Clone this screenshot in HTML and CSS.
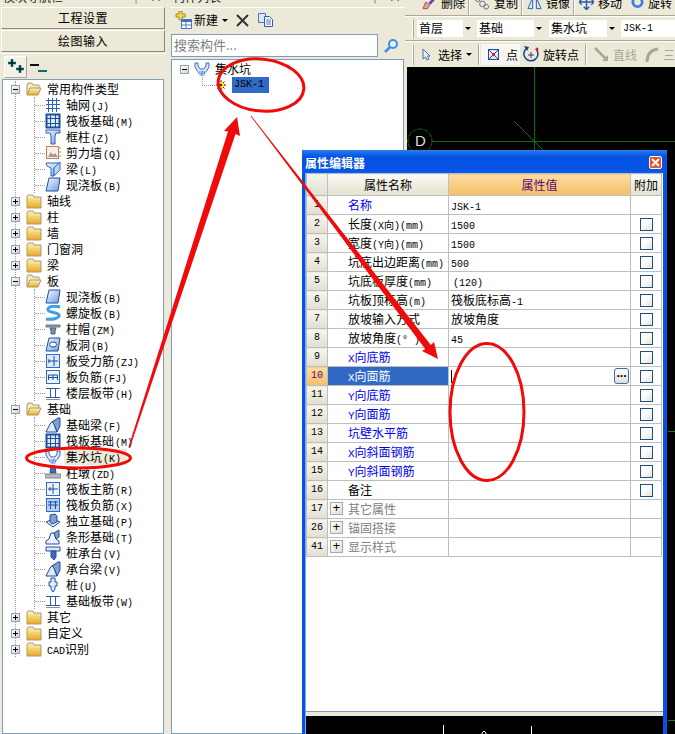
FILE: index.html
```html
<!DOCTYPE html>
<html lang="zh-CN">

<head>
    <meta charset="UTF-8">
    <title>属性编辑器</title>
    <link rel="stylesheet" href="styles.css">
</head>

<body>
    <svg class="defs" width="0" height="0">
        <defs>
            <linearGradient id="fold" x1="0" y1="0" x2="0" y2="1">
                <stop offset="0" stop-color="#fff3c0" />
                <stop offset="1" stop-color="#e8a91e" />
            </linearGradient>
            <linearGradient id="blu" x1="0" y1="0" x2="1" y2="1">
                <stop offset="0" stop-color="#f4f8ff" />
                <stop offset="1" stop-color="#6f9ee0" />
            </linearGradient>
            <symbol id="folder" viewBox="0 0 16 16">
                <path d="M1 4l1-2h5l1 2h7v11H1z" fill="url(#fold)" stroke="#a89a70" />
            </symbol>
            <symbol id="folder-open" viewBox="0 0 16 16">
                <path d="M1 14V4l1-2h4l1 2h6v3" fill="#f6e9b8" stroke="#a89a70" />
                <path d="M1 14l3-7h11l-3 7z" fill="url(#fold)" stroke="#a89a70" />
            </symbol>
            <symbol id="i-grid" viewBox="0 0 16 16">
                <path d="M3.500 1v14M7.500 1v14M11.500 1v14M1 3.500h14M1 7.500h14M1 11.500h14" stroke="#2b62c4" fill="none" />
            </symbol>
            <symbol id="i-raft" viewBox="0 0 16 16">
                <rect x="1.500" y="1.500" width="13" height="13" fill="#dfe9fa" stroke="#1d4f9f" stroke-width="2" />
                <path d="M5.500 2v12M10.500 2v12M2 5.500h12M2 10.500h12" stroke="#1d4f9f" fill="none" />
            </symbol>
            <symbol id="i-col" viewBox="0 0 16 16">
                <path d="M1 1h14v3H11l-1 3v8H6V7L5 4H1z" fill="url(#blu)" stroke="#2a5cb0" />
            </symbol>
            <symbol id="i-wall" viewBox="0 0 16 16">
                <rect x="1.500" y="1.500" width="12" height="12" fill="#fbeee6" stroke="#c08060" />
                <path d="M3 12l3-5 2 3 2-2 3 4z" fill="#9a9a9a" />
                <path d="M14 3h2M14 7h2M14 11h2" stroke="#d88020" />
            </symbol>
            <symbol id="i-beam" viewBox="0 0 16 16">
                <path d="M1 2h14l-1 3-5 2v8H6V7L2 5z" fill="url(#blu)" stroke="#2a6cc8" />
                <path d="M9 7l6-6v8l-6 6z" fill="#bcd4f4" stroke="#2a6cc8" />
            </symbol>
            <symbol id="i-slab" viewBox="0 0 16 16">
                <path d="M4 1h11l-2 13H1z" fill="url(#blu)" stroke="#1d4f9f" />
            </symbol>
            <symbol id="i-spiral" viewBox="0 0 16 16">
                <path d="M15 2C8 0 2 2 3 5s10 2 11 5-6 5-13 4" fill="none" stroke="#3f9de8" stroke-width="3" />
            </symbol>
            <symbol id="i-cap" viewBox="0 0 16 16">
                <path d="M1 4h14v2H1z" fill="#9aa0a8" stroke="#70757c" />
                <path d="M5 7h6l-1 3v3H6v-3z" fill="#6f8fc0" stroke="#50607a" />
            </symbol>
            <symbol id="i-hole" viewBox="0 0 16 16">
                <path d="M4 1h11l-2 13H1z" fill="url(#blu)" stroke="#1d4f9f" />
                <ellipse cx="8" cy="7.500" rx="3.500" ry="2.500" fill="#fff" stroke="#1d4f9f" />
            </symbol>
            <symbol id="i-rebar" viewBox="0 0 16 16">
                <rect x="1.500" y="1.500" width="13" height="13" fill="#dfe9fa" stroke="#2a6cc8" />
                <path d="M3 8h10M9 3v10" stroke="#1d4f9f" fill="none" />
                <path d="M4 6v4" stroke="#1d4f9f" />
            </symbol>
            <symbol id="i-neg" viewBox="0 0 16 16">
                <rect x="1.500" y="1.500" width="13" height="13" fill="#eef4fd" stroke="#2a6cc8" />
                <path d="M3.500 11V6h9v5M3 8.500h10M8 6v5" stroke="#1d4f9f" fill="none" />
            </symbol>
            <symbol id="i-band" viewBox="0 0 16 16">
                <path d="M1 3.500h14M1 12.500h14" stroke="#2a5cb0" fill="none" />
                <path d="M5.500 4v8M10.500 4v8" stroke="#2a5cb0" fill="none" />
                <path d="M1 14.500h14" stroke="#909090" stroke-width="1" />
            </symbol>
            <symbol id="i-fbeam" viewBox="0 0 16 16">
                <path d="M1 15l4-8 3-3h2l-1 3 3 8z" fill="#dfe9fa" stroke="#1d4f9f" />
                <path d="M7 5l6-4h2v8l-3 6-3-8z" fill="#7f9fcc" stroke="#1d4f9f" />
            </symbol>
            <symbol id="i-pit" viewBox="0 0 16 16">
                <path d="M1 2h3v3l2 3h4l2-3V2h3v4l-3 5H4L1 6z" fill="#dfe9fa" stroke="#2a6cc8" />
                <path d="M3 10h10l-3 5H6z" fill="#9cc0ec" />
                <path d="M4 12h1M7 13h1M10 12h1M8 11h1" stroke="#2a5cb0" />
            </symbol>
            <symbol id="i-pier" viewBox="0 0 16 16">
                <path d="M6 1h4l1 7H5z" fill="#3f6cb4" stroke="#2a4c88" />
                <path d="M0 9h16v4H0z" fill="#b8bcc4" stroke="#80858c" />
            </symbol>
            <symbol id="i-main" viewBox="0 0 16 16">
                <rect x="1.500" y="1.500" width="13" height="13" fill="#eef4fd" stroke="#2a6cc8" />
                <path d="M3 8h10M8 3v10M5 6v4" stroke="#1d4f9f" fill="none" />
            </symbol>
            <symbol id="i-negx" viewBox="0 0 16 16">
                <rect x="1.500" y="1.500" width="13" height="13" fill="#b8d0f0" stroke="#2a6cc8" />
                <path d="M3 8h10M5.500 4v8M10.500 4v8M3 5h10" stroke="#1d4f9f" fill="none" />
            </symbol>
            <symbol id="i-iso" viewBox="0 0 16 16">
                <path d="M1 9l7-3 7 3-7 5z" fill="#dfe9fa" stroke="#1d4f9f" />
                <path d="M5 2l5-1 2 2v6l-5 2-2-2z" fill="#7f9fcc" stroke="#1d4f9f" />
            </symbol>
            <symbol id="i-strip" viewBox="0 0 16 16">
                <path d="M1 15v-3l3-2 2-6h3l2 6 3 2v3z" fill="#eef4fd" stroke="#1d4f9f" />
                <path d="M9 4l5-3v7l-3 2z" fill="#7f9fcc" stroke="#1d4f9f" />
            </symbol>
            <symbol id="i-pcap" viewBox="0 0 16 16">
                <path d="M1 2h14v4H1z" fill="#dfe9fa" stroke="#1d4f9f" />
                <path d="M6 6h5v6l-2 3-3-3z" fill="#3f6cb4" stroke="#1d4f9f" />
            </symbol>
            <symbol id="i-pile" viewBox="0 0 16 16">
                <path d="M6 1h4v4h2v4h-2v3l-2 3-2-3V9H4V5h2z" fill="#dfe9fa" stroke="#1d4f9f" />
            </symbol>
        </defs>
    </svg>

    <div class="app">
        <!-- 左侧导航 -->
        <div class="side">
            <div class="pane-title"><span>模块导航栏</span><span class="pane-btns"><i>╃</i><i>×</i></span></div>
            <div class="big-btn first">工程设置</div>
            <div class="big-btn">绘图输入</div>
            <div class="expand-bar">
                <div class="expand-btn">
                    <svg width="20" height="20" viewBox="0 0 20 20">
                        <path d="M6 2v8M2 6h8M14 8v8M10 12h8" stroke="#0b6f6f" stroke-width="2.500" fill="none" />
                        <path d="M6 3v6M3 6h6M14 9v6M11 12h6" stroke="#111" stroke-width="1" fill="none" />
                    </svg>
                </div>
                <svg class="collapse" width="18" height="14" viewBox="0 0 18 14">
                    <path d="M0 4h9" stroke="#111" stroke-width="2" />
                    <path d="M8 10h9" stroke="#0b6f6f" stroke-width="2" />
                </svg>
            </div>
            <div class="tree-box">
                <ul class="tree">
                    <li>
                        <div class="row"><i class="exp minus"></i><svg class="ico fold"><use href="#folder-open" /></svg><span class="lbl">常用构件类型</span></div>
                        <ul class="kids">
                            <li><div class="row"><svg class="ico"><use href="#i-grid" /></svg><span class="lbl">轴网<em>(J)</em></span></div></li>
                            <li><div class="row"><svg class="ico"><use href="#i-raft" /></svg><span class="lbl">筏板基础<em>(M)</em></span></div></li>
                            <li><div class="row"><svg class="ico"><use href="#i-col" /></svg><span class="lbl">框柱<em>(Z)</em></span></div></li>
                            <li><div class="row"><svg class="ico"><use href="#i-wall" /></svg><span class="lbl">剪力墙<em>(Q)</em></span></div></li>
                            <li><div class="row"><svg class="ico"><use href="#i-beam" /></svg><span class="lbl">梁<em>(L)</em></span></div></li>
                            <li><div class="row"><svg class="ico"><use href="#i-slab" /></svg><span class="lbl">现浇板<em>(B)</em></span></div></li>
                        </ul>
                    </li>
                    <li><div class="row"><i class="exp plus"></i><svg class="ico fold"><use href="#folder" /></svg><span class="lbl">轴线</span></div></li>
                    <li><div class="row"><i class="exp plus"></i><svg class="ico fold"><use href="#folder" /></svg><span class="lbl">柱</span></div></li>
                    <li><div class="row"><i class="exp plus"></i><svg class="ico fold"><use href="#folder" /></svg><span class="lbl">墙</span></div></li>
                    <li><div class="row"><i class="exp plus"></i><svg class="ico fold"><use href="#folder" /></svg><span class="lbl">门窗洞</span></div></li>
                    <li><div class="row"><i class="exp plus"></i><svg class="ico fold"><use href="#folder" /></svg><span class="lbl">梁</span></div></li>
                    <li>
                        <div class="row"><i class="exp minus"></i><svg class="ico fold"><use href="#folder-open" /></svg><span class="lbl">板</span></div>
                        <ul class="kids">
                            <li><div class="row"><svg class="ico"><use href="#i-slab" /></svg><span class="lbl">现浇板<em>(B)</em></span></div></li>
                            <li><div class="row"><svg class="ico"><use href="#i-spiral" /></svg><span class="lbl">螺旋板<em>(B)</em></span></div></li>
                            <li><div class="row"><svg class="ico"><use href="#i-cap" /></svg><span class="lbl">柱帽<em>(ZM)</em></span></div></li>
                            <li><div class="row"><svg class="ico"><use href="#i-hole" /></svg><span class="lbl">板洞<em>(B)</em></span></div></li>
                            <li><div class="row"><svg class="ico"><use href="#i-rebar" /></svg><span class="lbl">板受力筋<em>(ZJ)</em></span></div></li>
                            <li><div class="row"><svg class="ico"><use href="#i-neg" /></svg><span class="lbl">板负筋<em>(FJ)</em></span></div></li>
                            <li><div class="row"><svg class="ico"><use href="#i-band" /></svg><span class="lbl">楼层板带<em>(H)</em></span></div></li>
                        </ul>
                    </li>
                    <li>
                        <div class="row"><i class="exp minus"></i><svg class="ico fold"><use href="#folder-open" /></svg><span class="lbl">基础</span></div>
                        <ul class="kids">
                            <li><div class="row"><svg class="ico"><use href="#i-fbeam" /></svg><span class="lbl">基础梁<em>(F)</em></span></div></li>
                            <li><div class="row"><svg class="ico"><use href="#i-raft" /></svg><span class="lbl">筏板基础<em>(M)</em></span></div></li>
                            <li><div class="row"><svg class="ico"><use href="#i-pit" /></svg><span class="lbl sel">集水坑<em>(K)</em></span></div></li>
                            <li><div class="row"><svg class="ico"><use href="#i-pier" /></svg><span class="lbl">柱墩<em>(ZD)</em></span></div></li>
                            <li><div class="row"><svg class="ico"><use href="#i-main" /></svg><span class="lbl">筏板主筋<em>(R)</em></span></div></li>
                            <li><div class="row"><svg class="ico"><use href="#i-negx" /></svg><span class="lbl">筏板负筋<em>(X)</em></span></div></li>
                            <li><div class="row"><svg class="ico"><use href="#i-iso" /></svg><span class="lbl">独立基础<em>(P)</em></span></div></li>
                            <li><div class="row"><svg class="ico"><use href="#i-strip" /></svg><span class="lbl">条形基础<em>(T)</em></span></div></li>
                            <li><div class="row"><svg class="ico"><use href="#i-pcap" /></svg><span class="lbl">桩承台<em>(V)</em></span></div></li>
                            <li><div class="row"><svg class="ico"><use href="#i-fbeam" /></svg><span class="lbl">承台梁<em>(V)</em></span></div></li>
                            <li><div class="row"><svg class="ico"><use href="#i-pile" /></svg><span class="lbl">桩<em>(U)</em></span></div></li>
                            <li><div class="row"><svg class="ico"><use href="#i-band" /></svg><span class="lbl">基础板带<em>(W)</em></span></div></li>
                        </ul>
                    </li>
                    <li><div class="row"><i class="exp plus"></i><svg class="ico fold"><use href="#folder" /></svg><span class="lbl">其它</span></div></li>
                    <li><div class="row"><i class="exp plus"></i><svg class="ico fold"><use href="#folder" /></svg><span class="lbl">自定义</span></div></li>
                    <li><div class="row"><i class="exp plus"></i><svg class="ico fold"><use href="#folder" /></svg><span class="lbl"><span class="mono">CAD</span>识别</span></div></li>
                </ul>
            </div>
        </div>

        <!-- 构件列表 -->
        <div class="list">
            <div class="pane-title"><span>构件列表</span><span class="pane-btns"><i>╃</i><i>×</i></span></div>
            <div class="list-tools">
                <svg width="17" height="18" viewBox="0 0 17 18">
                    <path d="M4 0h3v3h3v3H7v3H4V6H1V3h3z" fill="#f4d84a" stroke="#a08a20" />
                    <rect x="6.500" y="8.500" width="10" height="9" fill="#fff" stroke="#4a78c0" />
                    <path d="M7 9h9v2H7z" fill="#3f6cc0" />
                    <path d="M7 14h9M11 11v6" stroke="#4a78c0" />
                </svg>
                <span class="new-txt">新建</span>
                <i class="caret"></i>
                <svg class="del" width="13" height="13" viewBox="0 0 13 13">
                    <path d="M1 1l11 11M12 1L1 12" stroke="#333" stroke-width="2" />
                </svg>
                <svg class="copy" width="16" height="14" viewBox="0 0 16 14">
                    <path d="M.5.500h7v9h-7z" fill="#dbe8fa" stroke="#4a78c0" />
                    <path d="M6.500 3.500h5l3 3v7h-8z" fill="#fff" stroke="#2a5cb0" />
                    <path d="M8 7h5M8 9h5M8 11h5" stroke="#4a78c0" />
                </svg>
            </div>
            <div class="search-row">
                <div class="search">搜索构件...</div>
                <svg class="search-btn" width="15" height="14" viewBox="0 0 15 14">
                    <circle cx="9" cy="5" r="4" fill="#e6f2ff" stroke="#3f8fe0" stroke-width="2" />
                    <path d="M6 8l-5 5" stroke="#3f8fe0" stroke-width="2.500" />
                </svg>
            </div>
            <div class="list-tree">
                <div class="lrow"><i class="exp minus flat"></i><svg class="pit"><use href="#i-pit" /></svg><span>集水坑</span></div>
                <div class="lrow child">
                    <i class="dots"></i>
                    <svg class="gear" width="10" height="10" viewBox="0 0 10 10">
                        <circle cx="5" cy="5" r="3.500" fill="#ffe020" />
                        <path d="M5 0v10M0 5h10M1.500 1.500l7 7M8.500 1.500l-7 7" stroke="#222" stroke-dasharray="2 2" />
                    </svg>
                    <span class="cur">JSK-1</span>
                </div>
            </div>
        </div>

        <!-- 绘图区 -->
        <div class="work">
            <div class="bar bar-cut">
                <div class="tool">
                    <svg width="15" height="14" viewBox="0 0 16 14">
                        <path d="M15 0L8 8" stroke="#7040a0" stroke-width="3" />
                        <path d="M1 13l3-7 4 3-2 4z" fill="#f0a0a0" stroke="#a05050" />
                    </svg>删除
                </div>
                <i class="sep"></i>
                <div class="tool">
                    <svg width="16" height="14" viewBox="0 0 17 14">
                        <circle cx="4" cy="3" r="2.500" fill="none" stroke="#668" />
                        <circle cx="9" cy="8" r="3" fill="none" stroke="#668" />
                        <circle cx="13" cy="11" r="2.500" fill="none" stroke="#668" />
                    </svg>复制
                </div>
                <i class="sep"></i>
                <div class="tool">
                    <svg width="15" height="14" viewBox="0 0 16 14">
                        <path d="M6 1v12H1zM10 1v12h5z" fill="#dbe8fa" stroke="#2a5cb0" />
                    </svg>镜像
                </div>
                <i class="sep"></i>
                <div class="tool">
                    <svg width="15" height="14" viewBox="0 0 16 14">
                        <path d="M8 0v14M1 6h14M5 3l3-3 3 3M5 11l3 3 3-3M3 3L0 6l3 3M13 3l3 3-3 3" fill="none" stroke="#2a5cb0" stroke-width="1.500" />
                    </svg>移动
                </div>
                <div class="tool t-rot">
                    <svg width="13" height="14" viewBox="0 0 14 14">
                        <circle cx="7" cy="6" r="5" fill="none" stroke="#3f7fd8" stroke-width="3" />
                    </svg>旋转
                </div>
            </div>
            <div class="bar bar-sel">
                <i class="grip"></i>
                <div class="combo c1"><span>首层</span><i class="caret-btn"></i></div>
                <div class="combo c2"><span>基础</span><i class="caret-btn"></i></div>
                <div class="combo c3"><span>集水坑</span><i class="caret-btn"></i></div>
                <div class="combo c4"><span class="mono">JSK-1</span></div>
            </div>
            <div class="bar bar-draw">
                <i class="grip"></i>
                <svg class="cursor" width="9" height="13" viewBox="0 0 9 13">
                    <path d="M1 1v10l2.500-2L5 12l2-1-1.500-3H8z" fill="#e8eef8" stroke="#4a6ca8" />
                </svg>
                <span class="txt-sel">选择</span>
                <i class="caret"></i>
                <i class="sep tall"></i>
                <div class="dot-btn">
                    <svg width="11" height="11" viewBox="0 0 11 11">
                        <rect x=".5" y=".5" width="10" height="10" fill="#dbe8fa" stroke="#2a4c98" />
                        <path d="M1 1l9 9M10 1l-9 9" stroke="#2a4c98" />
                        <rect x="4" y="4" width="3" height="3" fill="#e02020" />
                    </svg>
                    <span>点</span>
                </div>
                <svg class="rot" width="16" height="17" viewBox="0 0 16 17">
                    <path d="M13 3a7 7 0 1 1-9-1" fill="none" stroke="#1d3f88" stroke-width="1.500" />
                    <path d="M1 0l5 1-2 4z" fill="#1d3f88" />
                    <path d="M5 9h6M8 6v6" stroke="#1d3f88" />
                    <circle cx="14" cy="3" r="1.500" fill="#e02020" />
                </svg>
                <span class="txt-rot">旋转点</span>
                <i class="sep tall"></i>
                <svg class="line-ico" width="15" height="15" viewBox="0 0 15 15">
                    <path d="M1 1l11 11" stroke="#a8a698" stroke-width="2.500" />
                    <path d="M14 14H8l6-6z" fill="#a8a698" />
                </svg>
                <span class="off">直线</span>
                <svg class="arc-ico" width="14" height="15" viewBox="0 0 14 15">
                    <path d="M2 15C2 8 5 3 13 2" fill="none" stroke="#a8a698" stroke-width="3" />
                </svg>
                <span class="off">三</span>
            </div>
            <div class="canvas">
                <svg class="canvas-lines" width="268" height="667" viewBox="407 67 268 667">
                    <path d="M534.500 67v90M407 141.500h268M514 121l30 30" stroke="#0a6e0a" fill="none" />
                    <path d="M668 431.500h7M668 720.500h7" stroke="#0a8a0a" fill="none" />
                    <circle cx="420" cy="141" r="12" fill="#000" stroke="#0a6e0a" stroke-dasharray="5 1" />
                </svg>
                <span class="axis">D</span>
            </div>
        </div>

        <!-- 属性编辑器 -->
        <div class="dlg">
            <div class="dlg-title">
                <span>属性编辑器</span>
                <i class="dlg-close">
                    <svg width="9" height="9" viewBox="0 0 9 9">
                        <path d="M1 1l7 7M8 1L1 8" stroke="#fff" stroke-width="2" />
                    </svg>
                </i>
            </div>
            <div class="dlg-inner">
                <div class="dlg-body">
                    <table class="prop">
                        <colgroup>
                            <col class="c-no">
                            <col class="c-name">
                            <col class="c-val">
                            <col class="c-add">
                        </colgroup>
                        <tr class="head">
                            <th class="no"></th>
                            <th>属性名称</th>
                            <th class="active">属性值</th>
                            <th>附加</th>
                        </tr>
                        <tr><td class="no">1</td><td class="name link">名称</td><td class="val"><span class="mono">JSK-1</span></td><td></td></tr>
                        <tr><td class="no">2</td><td class="name">长度<em>(X向)(mm)</em></td><td class="val"><span class="mono">1500</span></td><td class="add"><i class="chk"></i></td></tr>
                        <tr><td class="no">3</td><td class="name">宽度<em>(Y向)(mm)</em></td><td class="val"><span class="mono">1500</span></td><td class="add"><i class="chk"></i></td></tr>
                        <tr><td class="no">4</td><td class="name">坑底出边距离<em>(mm)</em></td><td class="val"><span class="mono">500</span></td><td class="add"><i class="chk"></i></td></tr>
                        <tr><td class="no">5</td><td class="name">坑底板厚度<em>(mm)</em></td><td class="val"><span class="mono pad">(120)</span></td><td class="add"><i class="chk"></i></td></tr>
                        <tr><td class="no">6</td><td class="name">坑板顶标高<em>(m)</em></td><td class="val">筏板底标高<span class="mono">-1</span></td><td class="add"><i class="chk"></i></td></tr>
                        <tr><td class="no">7</td><td class="name">放坡输入方式</td><td class="val">放坡角度</td><td class="add"><i class="chk"></i></td></tr>
                        <tr><td class="no">8</td><td class="name">放坡角度<em>(° )</em></td><td class="val"><span class="mono">45</span></td><td class="add"><i class="chk"></i></td></tr>
                        <tr><td class="no">9</td><td class="name link"><span class="mono">X</span>向底筋</td><td class="val"></td><td class="add"><i class="chk"></i></td></tr>
                        <tr class="cur-row">
                            <td class="no on">10</td>
                            <td class="name on-name"><span class="mono">X</span>向面筋</td>
                            <td class="val"><div class="edit"><i class="text-cursor"></i><i class="more">...</i></div></td>
                            <td class="add"><i class="chk"></i></td>
                        </tr>
                        <tr><td class="no">11</td><td class="name link"><span class="mono">Y</span>向底筋</td><td class="val"></td><td class="add"><i class="chk"></i></td></tr>
                        <tr><td class="no">12</td><td class="name link"><span class="mono">Y</span>向面筋</td><td class="val"></td><td class="add"><i class="chk"></i></td></tr>
                        <tr><td class="no">13</td><td class="name link">坑壁水平筋</td><td class="val"></td><td class="add"><i class="chk"></i></td></tr>
                        <tr><td class="no">14</td><td class="name link"><span class="mono">X</span>向斜面钢筋</td><td class="val"></td><td class="add"><i class="chk"></i></td></tr>
                        <tr><td class="no">15</td><td class="name link"><span class="mono">Y</span>向斜面钢筋</td><td class="val"></td><td class="add"><i class="chk"></i></td></tr>
                        <tr><td class="no">16</td><td class="name">备注</td><td class="val"></td><td class="add"><i class="chk"></i></td></tr>
                        <tr><td class="no">17</td><td class="group"><i class="grp-plus">+</i>其它属性</td><td></td><td></td></tr>
                        <tr><td class="no">26</td><td class="group"><i class="grp-plus">+</i>锚固搭接</td><td></td><td></td></tr>
                        <tr><td class="no">41</td><td class="group"><i class="grp-plus">+</i>显示样式</td><td></td><td></td></tr>
                    </table>
                </div>
                <div class="preview">
                    <svg width="358" height="18" viewBox="306 716 358 18">
                        <path d="M443.500 725v9M531.500 726v8" stroke="#fff" fill="none" />
                        <path d="M482 734v-1l2-2 2 2v1" stroke="#fff" fill="none" />
                    </svg>
                </div>
            </div>
        </div>

        <!-- 红色标注 -->
        <svg class="marks" width="675" height="734" viewBox="0 0 675 734">
            <g fill="none" stroke="#f00a0a" stroke-width="3">
                <ellipse cx="78.500" cy="458" rx="52" ry="10" />
                <ellipse cx="261" cy="85" rx="43" ry="26" transform="rotate(6 261 85)" />
                <ellipse cx="487" cy="412" rx="37" ry="68.500" />
            </g>
            <g fill="#f00a0a">
                <polygon points="130,447.500 235.500,134 240,136 237,117 224,131 228,131.500 128.500,447" />
                <polygon points="251.300,115.800 430.800,344.900 434,342 438,359 422,351 425.200,349.100 250.700,116.200" />
            </g>
        </svg>
    </div>
</body>

</html>
```

FILE: styles.css
```css
* {
    box-sizing: border-box;
}

html,
body {
    margin: 0;
    padding: 0;
}

body {
    width: 675px;
    height: 734px;
    overflow: hidden;
    font-family: "Noto Sans CJK SC", "Liberation Sans", sans-serif;
    font-size: 12px;
    line-height: 16px;
    color: #000;
    background-color: #ECE9D8;
}

i,
em {
    font-style: normal;
}

ul {
    list-style: none;
    margin: 0;
    padding: 0;
}

.defs {
    position: absolute;
}

/* 行高设小一点，混排时不把表格行撑高 */
.mono,
em {
    font-family: "Liberation Mono", monospace;
    font-size: 10px;
    line-height: 10px;
}

.app {
    position: relative;
    display: flex;
    width: 675px;
    height: 734px;
    overflow: hidden;
}

/* 面板标题，只露出下半截 */
.pane-title {
    display: flex;
    justify-content: space-between;
    align-items: flex-end;
    height: 5px;
    overflow: hidden;
    padding: 0 4px 0 3px;
    line-height: 16px;
    color: #222;
}

.pane-btns {
    display: flex;
    gap: 8px;
}

/* 左侧导航 */
.side {
    display: flex;
    flex-direction: column;
    width: 166px;
    height: 734px;
    flex-shrink: 0;
}

.big-btn {
    height: 22px;
    margin: 0 1px 1px;
    text-align: center;
    font-size: 12px;
    line-height: 20px;
    letter-spacing: .5px;
    background-color: #ECE9D8;
    border: 1px solid;
    border-color: #fff #8a8878 #8a8878 #fff;
}

.big-btn.first {
    margin-top: 2px;
}

.expand-bar {
    display: flex;
    align-items: center;
    height: 26px;
    margin: 0 1px;
    padding-left: 3px;
    border-top: 1px solid #fff;
}

.expand-btn {
    display: flex;
    align-items: center;
    justify-content: center;
    width: 23px;
    height: 22px;
    background-color: #F3F1E8;
    border: 1px solid;
    border-color: #fff #aca899 #aca899 #fff;
}

.collapse {
    margin-left: 3px;
    margin-top: 2px;
}

.tree-box {
    flex: 1;
    margin: 0 2px;
    padding-top: 1px;
    overflow: hidden;
    background-color: #fff;
    border: 1px solid #7F9DB9;
}

.tree {
    margin: 8px 0 8px 12px;
    border-left: 1px dotted #999;
}

.tree > li:first-child {
    margin-top: -8px;
}

.tree > li:last-child {
    margin-bottom: -8px;
}

.kids {
    margin: 0 0 8px 18px;
    border-left: 1px dotted #999;
}

.kids > li:last-child {
    margin-bottom: -8px;
}

.row {
    display: flex;
    align-items: center;
    height: 16px;
    white-space: nowrap;
}

.kids .row::before {
    content: "";
    width: 10px;
    flex-shrink: 0;
    border-top: 1px dotted #999;
}

.ico {
    width: 16px;
    height: 16px;
    flex-shrink: 0;
}

.tree > li > .row {
    margin-left: -5px;
}

.tree .fold {
    margin-left: 6px;
}

.lbl {
    margin-left: 3px;
    padding: 0 2px;
    height: 16px;
    line-height: 16px;
}

.kids .lbl {
    margin-left: 3px;
}

.lbl em {
    margin-left: 1px;
}

.sel {
    background-color: #ECE9D8;
    padding-right: 6px;
}

/* 展开/折叠小方块 */
.exp {
    position: relative;
    display: block;
    width: 9px;
    height: 9px;
    flex-shrink: 0;
    background: linear-gradient(135deg, #fff, #d8d4c4);
    border: 1px solid #8ba2b8;
}

.exp::before {
    content: "";
    position: absolute;
    left: 1px;
    top: 3px;
    width: 5px;
    height: 1px;
    background-color: #000;
}

.exp.plus::after {
    content: "";
    position: absolute;
    left: 3px;
    top: 1px;
    width: 1px;
    height: 5px;
    background-color: #000;
}

/* 构件列表 */
.list {
    display: flex;
    flex-direction: column;
    width: 239px;
    height: 734px;
    flex-shrink: 0;
    padding-left: 4px;
}

.list-tools {
    display: flex;
    align-items: center;
    height: 25px;
    margin-top: 2px;
    padding-left: 5px;
    border-top: 1px solid #fff;
}

.new-txt {
    margin-left: 2px;
}

.caret {
    display: block;
    width: 0;
    height: 0;
    margin-left: 4px;
    border: 3px solid transparent;
    border-top: 3px solid #000;
    border-bottom: 0;
}

.del {
    margin-left: 8px;
}

.copy {
    margin-left: 9px;
}

.search-row {
    display: flex;
    align-items: center;
    height: 23px;
    margin: 2px 0 0 1px;
}

.search {
    width: 207px;
    height: 23px;
    padding-left: 2px;
    font-size: 13px;
    line-height: 20px;
    color: #808080;
    background-color: #fff;
    border: 1px solid #7F9DB9;
}

.search-btn {
    margin-left: 6px;
}

.list-tree {
    flex: 1;
    margin: 2px 1px 0;
    padding-top: 1px;
    background-color: #fff;
    border: 1px solid #7F9DB9;
}

.lrow {
    display: flex;
    align-items: center;
    height: 16px;
    padding-left: 8px;
}

.pit {
    width: 18px;
    height: 16px;
    margin-left: 4px;
    margin-right: 4px;
}

.lrow.child {
    padding-left: 30px;
}

.dots {
    display: block;
    width: 13px;
    height: 9px;
    align-self: flex-start;
    border-left: 1px dotted #999;
    border-bottom: 1px dotted #999;
}

.gear {
    margin-left: 1px;
}

.lrow .gear + .cur {
    margin-left: 6px;
}

.cur {
    width: 37px;
    height: 16px;
    padding-left: 2px;
    font-family: "Liberation Mono", monospace;
    font-size: 10px;
    line-height: 16px;
    background-color: #316AC5;
}

/* 绘图区 */
.work {
    display: flex;
    flex-direction: column;
    flex: 1;
    min-width: 0;
    height: 734px;
}

.bar {
    display: flex;
    align-items: center;
    white-space: nowrap;
    overflow: hidden;
}

.bar-cut {
    height: 16px;
    padding-left: 17px;
    align-items: flex-end;
    border-bottom: 1px solid #aca899;
}

.tool {
    display: flex;
    align-items: center;
    gap: 4px;
    height: 16px;
    margin-bottom: 4px;
    flex-shrink: 0;
}

.t-rot {
    margin-left: 9px;
}

.sep {
    display: block;
    width: 1px;
    height: 16px;
    flex-shrink: 0;
    margin: 0 5px 0 3px;
    background-color: #aca899;
    box-shadow: 1px 0 0 #fff;
}

.bar-sel {
    height: 25px;
    padding-left: 7px;
    border-bottom: 1px solid #aca899;
    border-top: 1px solid #fff;
}

.bar-draw {
    height: 26px;
    padding-left: 7px;
    border-top: 1px solid #fff;
}

.grip {
    display: block;
    width: 2px;
    height: 20px;
    flex-shrink: 0;
    margin-right: 3px;
    background-color: #fff;
    border-right: 1px solid #aca899;
}

.combo {
    display: flex;
    justify-content: space-between;
    height: 17px;
    padding-left: 2px;
    line-height: 16px;
    flex-shrink: 0;
    background-color: #fff;
}

.combo .mono {
    line-height: 17px;
}

.c1 {
    width: 56px;
    margin-right: 4px;
}

.c2 {
    width: 67px;
    margin-right: 5px;
}

.c3 {
    width: 68px;
    margin-right: 4px;
}

.c4 {
    width: 60px;
}

.caret-btn {
    position: relative;
    display: block;
    width: 10px;
    background-color: #ECE9D8;
}

.caret-btn::after {
    content: "";
    position: absolute;
    left: 2px;
    top: 7px;
    border: 3px solid transparent;
    border-top: 3px solid #000;
    border-bottom: 0;
}

.cursor {
    margin-left: 5px;
    flex-shrink: 0;
}

.txt-sel {
    margin-left: 7px;
}

.bar-draw .sep.tall {
    height: 21px;
    margin: 0 2px 0 6px;
}

.dot-btn {
    display: flex;
    align-items: center;
    width: 39px;
    height: 21px;
    padding-left: 7px;
    gap: 7px;
    flex-shrink: 0;
    background-color: #F7F6F0;
}

.rot {
    margin-left: 3px;
    flex-shrink: 0;
}

.txt-rot {
    margin-left: 4px;
}

.line-ico {
    margin-left: 6px;
    flex-shrink: 0;
}

.off {
    margin-left: 4px;
    color: #A8A698;
}

.arc-ico {
    margin-left: 8px;
    flex-shrink: 0;
}

.canvas {
    position: relative;
    flex: 1;
    margin-left: 2px;
    background-color: #000;
}

.canvas-lines {
    display: block;
}

.axis {
    position: absolute;
    left: 8px;
    top: 64px;
    font-family: "Liberation Sans", sans-serif;
    font-size: 15px;
    line-height: 20px;
    color: #ddd;
}

/* 属性编辑器 */
.dlg {
    position: absolute;
    left: 302px;
    top: 150px;
    display: flex;
    flex-direction: column;
    width: 365px;
    height: 584px;
    background: #0553E3;
    border-radius: 3px 3px 0 0;
}

.dlg-title {
    display: flex;
    justify-content: space-between;
    align-items: center;
    height: 23px;
    padding: 2px 5px 0 3px;
    font-weight: bold;
    color: #fff;
    background: linear-gradient(#2A7DF0, #0553E3 30%, #0553E3 80%, #0A5CF0);
}

.dlg-close {
    display: flex;
    align-items: center;
    justify-content: center;
    width: 13px;
    height: 13px;
    background-color: #E0512E;
    border: 1px solid #fff;
    border-radius: 2px;
}

.dlg-inner {
    display: flex;
    flex-direction: column;
    flex: 1;
    min-height: 0;
    margin: 0 4px 0 3px;
    border-left: 1px solid #7FA8E8;
    background-color: #ECE9D8;
}

.dlg-body {
    flex: 1;
    background-color: #fff;
    border-bottom: 1px solid #7F9DB9;
}

.preview {
    height: 18px;
    margin-top: 4px;
    background-color: #000;
}

.preview svg {
    display: block;
}

.prop {
    table-layout: fixed;
    width: 355px;
    margin-left: 0;
    border-collapse: collapse;
}

.c-no {
    width: 21px;
}

.c-name {
    width: 121px;
}

.c-val {
    width: 182px;
}

.c-add {
    width: 31px;
}

.prop td,
.prop th {
    height: 19px;
    padding: 0;
    overflow: hidden;
    white-space: nowrap;
    font-weight: normal;
    line-height: 16px;
    border: 1px solid #BEBEBE;
}

.prop th {
    height: 22px;
    text-align: center;
    background: linear-gradient(#FBFAF5, #E4E1D0);
}

.prop th.active {
    color: #5A0A78;
    background: linear-gradient(#FBDDA2, #F5BF66);
}

.prop .no {
    font-family: "Liberation Mono", monospace;
    font-size: 10px;
    text-align: center;
    background: linear-gradient(#F7F6EE, #E2DFCF);
}

.prop .no.on {
    color: #5A0A78;
    background: linear-gradient(#FBDDA2, #F5BF66);
}

.name {
    padding-left: 20px !important;
}

.name .mono {
    font-size: 11px;
}

.link {
    color: #0000EE;
}

.name.on-name {
    color: #fff;
    background-color: #316AC5;
}

.val {
    padding-left: 2px !important;
}

.pad {
    padding-left: 2px;
}

.add {
    text-align: center;
}

.chk {
    display: block;
    width: 13px;
    height: 13px;
    margin: 0 auto;
    background: linear-gradient(135deg, #fff 40%, #E4E2D6);
    border: 1px solid #1C5180;
}

.edit {
    display: flex;
    justify-content: space-between;
    align-items: center;
    height: 17px;
    padding-right: 1px;
}

.text-cursor {
    display: block;
    width: 1px;
    height: 13px;
    background-color: #000;
}

.more {
    display: block;
    width: 15px;
    height: 16px;
    font-family: "Liberation Sans", sans-serif;
    font-size: 12px;
    font-weight: bold;
    line-height: 9px;
    text-align: center;
    background: linear-gradient(#fff, #E2DFCF);
    border: 1px solid #3C6EA0;
    border-radius: 3px;
}

.group {
    padding-left: 2px !important;
    color: #808080;
}

.grp-plus {
    display: inline-block;
    width: 13px;
    height: 13px;
    margin-right: 5px;
    font-family: "Liberation Mono", monospace;
    font-size: 13px;
    line-height: 11px;
    text-align: center;
    vertical-align: top;
    margin-top: 1px;
    color: #000;
    background: linear-gradient(135deg, #fff, #E2DFCF);
    border: 1px solid #A8A8A8;
}

/* 红色标注压在所有内容上面 */
.marks {
    position: absolute;
    left: 0;
    top: 0;
    pointer-events: none;
}
```
